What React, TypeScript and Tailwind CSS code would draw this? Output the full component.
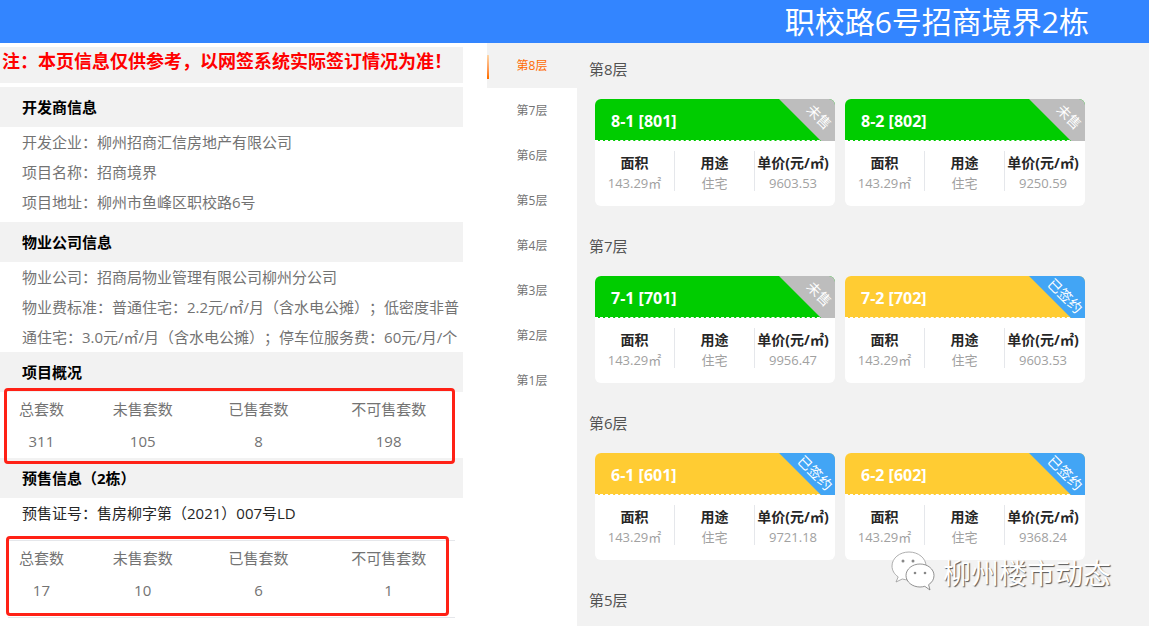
const floors = [
  {
    name: '第8层',
    units: [
      { id: '8-1 [801]', sold: false, price: '9603.53' },
      { id: '8-2 [802]', sold: false, price: '9250.59' },
    ],
  },
  {
    name: '第7层',
    units: [
      { id: '7-1 [701]', sold: false, price: '9956.47' },
      { id: '7-2 [702]', sold: true, price: '9603.53' },
    ],
  },
  {
    name: '第6层',
    units: [
      { id: '6-1 [601]', sold: true, price: '9721.18' },
      { id: '6-2 [602]', sold: true, price: '9368.24' },
    ],
  },
  { name: '第5层', units: [] },
]

const navItems = ['第8层', '第7层', '第6层', '第5层', '第4层', '第3层', '第2层', '第1层']

function SectionTitle({ children }: { children: React.ReactNode }) {
  return <div className="flex h-10 items-center bg-[#f2f2f2] pl-5.5 text-[15px] font-bold text-black">{children}</div>
}

function StatTable({ values }: { values: string[] }) {
  return (
    <table className="-ml-0.5 w-full text-center text-[15px] text-neutral-500">
      <tbody>
        <tr className="h-8">
          <td>总套数</td>
          <td>未售套数</td>
          <td>已售套数</td>
          <td>不可售套数</td>
        </tr>
        <tr className="h-8">
          {values.map((v, i) => (
            <td key={i}>{v}</td>
          ))}
        </tr>
      </tbody>
    </table>
  )
}

function UnitCard({ id, sold, price }: { id: string; sold: boolean; price: string }) {
  return (
    <div className="h-[107px] w-60 overflow-hidden rounded-md bg-white">
      <div
        className={`relative flex h-10.5 items-center border-b border-dashed border-white pl-4 pt-0.5 text-base font-bold text-white ${
          sold ? 'bg-[#ffcc33]' : 'bg-[#00cc00]'
        }`}
      >
        {id}
        <svg className="absolute right-0 top-0 h-10.5 w-14" viewBox="0 0 56 42">
          <polygon points="0,0 56,0 56,42 42,42" fill={sold ? '#42a5f5' : '#bdbdbd'} />
        </svg>
        <span
          className={`absolute flex h-6 w-12 rotate-45 items-center justify-center whitespace-nowrap text-sm font-normal ${
            sold ? '-right-1 top-2' : '-right-2 top-1.5'
          }`}
        >
          {sold ? '已签约' : '未售'}
        </span>
      </div>
      <div className="grid grid-cols-3 pt-2.5 text-center leading-5">
        <div className="h-10 border-r border-gray-200 pt-0.5">
          <div className="text-sm font-bold text-neutral-800">面积</div>
          <div className="text-[13px] text-neutral-400">143.29㎡</div>
        </div>
        <div className="h-10 border-r border-gray-200 pt-0.5">
          <div className="text-sm font-bold text-neutral-800">用途</div>
          <div className="text-[13px] text-neutral-400">住宅</div>
        </div>
        <div className="h-10 pr-1 pt-0.5">
          <div className="whitespace-nowrap text-sm font-bold text-neutral-800">单价(元/㎡)</div>
          <div className="text-[13px] text-neutral-400">{price}</div>
        </div>
      </div>
    </div>
  )
}

export default function App() {
  return (
    <div className="relative flex h-screen flex-col overflow-hidden bg-white font-['Open_Sans','Noto_Sans_CJK_SC',sans-serif] [text-spacing-trim:space-all]">
      <header className="flex h-[43px] shrink-0 items-center justify-end bg-[#3385ff] pr-15 text-3xl text-white">
        职校路6号招商境界2栋
      </header>

      <div className="flex min-h-0 flex-1">
        {/* left info column */}
        <div className="w-[463px] shrink-0 overflow-hidden pt-1 text-[15px] leading-7.5 text-neutral-500">
          <div className="h-9 whitespace-nowrap bg-[#f2f2f2] pl-0.5 pt-0.5 text-lg font-bold leading-6 text-[#ff0000]">
            注：本页信息仅供参考，以网签系统实际签订情况为准！
          </div>

          <div className="mt-1 pb-px">
            <SectionTitle>开发商信息</SectionTitle>
            <div className="pl-5.5">
              <p>开发企业：柳州招商汇信房地产有限公司</p>
              <p>项目名称：招商境界</p>
              <p>项目地址：柳州市鱼峰区职校路6号</p>
            </div>
          </div>

          <div className="mt-1">
            <SectionTitle>物业公司信息</SectionTitle>
            <div className="pl-5.5">
              <p>物业公司：招商局物业管理有限公司柳州分公司</p>
              <p>物业费标准：普通住宅：2.2元/㎡/月（含水电公摊）；低密度非普通住宅：3.0元/㎡/月（含水电公摊）；停车位服务费：60元/月/个</p>
            </div>
          </div>

          <SectionTitle>项目概况</SectionTitle>
          <div className="relative py-px">
            <StatTable values={['311', '105', '8', '198']} />
            <div className="absolute -bottom-1.5 -top-1 left-1 right-2 rounded-sm border-3 border-[#ff2116]" />
          </div>

          <SectionTitle>预售信息（2栋）</SectionTitle>
          <p className="pl-5.5 text-neutral-800">预售证号：售房柳字第（2021）007号LD</p>

          <div className="relative mt-3 pb-3 pt-0.5">
            <div className="absolute inset-x-2 top-0 border-t border-gray-200" />
            <div className="absolute inset-x-2 bottom-0 border-b border-gray-200" />
            <StatTable values={['17', '10', '6', '1']} />
            <div className="absolute -top-1 bottom-0.5 left-1.5 right-3.5 rounded-sm border-3 border-[#ff2116]" />
          </div>
        </div>

        {/* floor nav */}
        <nav className="ml-6 w-[90px] shrink-0 text-center text-xs text-neutral-500">
          {navItems.map((item, i) => (
            <div
              key={item}
              className={`relative flex h-[45px] items-center justify-center ${
                i === 0 ? 'bg-[#f2f2f2] text-orange-500' : ''
              }`}
            >
              {i === 0 && (
                <span className="absolute left-0 top-3 h-6 w-0.5 bg-gradient-to-b from-orange-200 to-orange-500" />
              )}
              {item}
            </div>
          ))}
        </nav>

        {/* floors */}
        <main className="flex-1 bg-[#f2f2f2] pl-3 pt-1.5">
          {floors.map((floor) => (
            <section key={floor.name} className="mb-5">
              <div className="flex h-10 items-center text-[15px] text-neutral-600">{floor.name}</div>
              {floor.units.length > 0 && (
                <div className="ml-1.5 mt-2.5 flex gap-2.5">
                  {floor.units.map((u) => (
                    <UnitCard key={u.id} {...u} />
                  ))}
                </div>
              )}
            </section>
          ))}
        </main>
      </div>

      {/* watermark */}
      <div className="absolute bottom-8 right-9.5 flex items-center gap-2 text-[28px] text-white [text-shadow:1px_1px_1px_#555]">
        <svg className="h-10 w-11" viewBox="0 0 44 40">
          <path
            d="M18 1C8.600 1 1 7.200 1 15c0 4.400 2.400 8.300 6.200 10.900L5 31l6.300-3c2.100.6 4.400 1 6.700 1 9.400 0 17-6.200 17-14S27.400 1 18 1z"
            fill="#fff"
            stroke="#999"
            strokeWidth="0.8"
          />
          <path
            d="M29 13c-7.700 0-14 5.100-14 11.500S21.300 36 29 36c1.700 0 3.300-.3 4.800-.7L39 39l-1.400-5.300c3.500-2.200 5.400-5.500 5.400-9.200C43 18.100 36.700 13 29 13z"
            fill="#fff"
            stroke="#777"
            strokeWidth="0.8"
          />
          <circle cx="12" cy="10" r="1.500" fill="#888" />
          <circle cx="22" cy="10" r="1.500" fill="#888" />
          <circle cx="24" cy="22" r="1.300" fill="#888" />
          <circle cx="34" cy="22" r="1.300" fill="#888" />
        </svg>
        <span className="mt-1">柳州楼市动态</span>
      </div>
    </div>
  )
}
